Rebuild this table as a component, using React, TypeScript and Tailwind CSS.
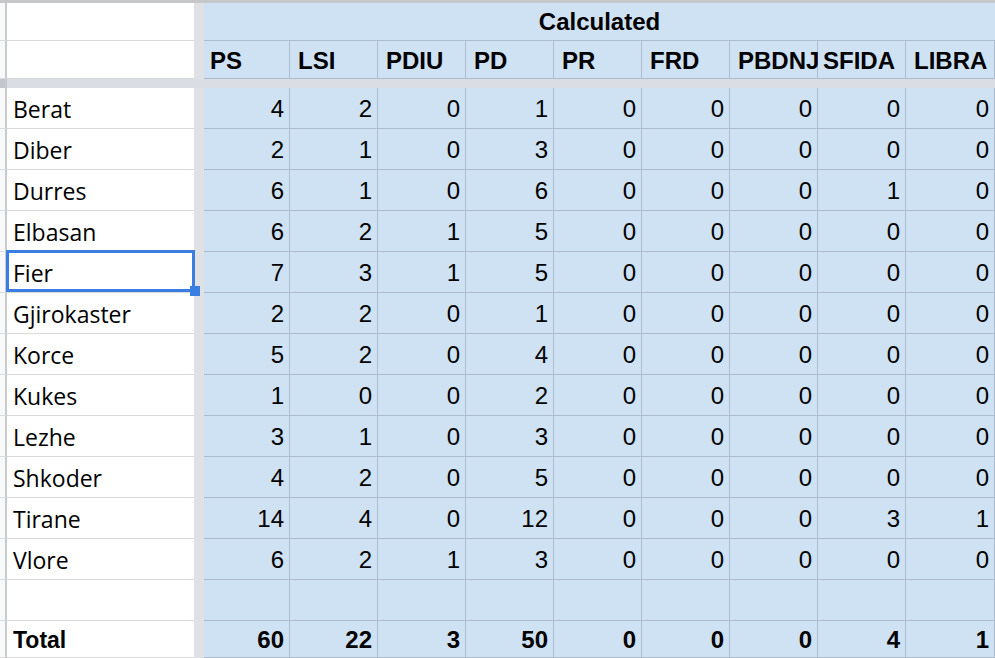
import React from "react";

type Row = { name: string; values: (number | null)[] };

const parties = ["PS", "LSI", "PDIU", "PD", "PR", "FRD", "PBDNJ", "SFIDA", "LIBRA"];

const rows: Row[] = [
  { name: "Berat", values: [4, 2, 0, 1, 0, 0, 0, 0, 0] },
  { name: "Diber", values: [2, 1, 0, 3, 0, 0, 0, 0, 0] },
  { name: "Durres", values: [6, 1, 0, 6, 0, 0, 0, 1, 0] },
  { name: "Elbasan", values: [6, 2, 1, 5, 0, 0, 0, 0, 0] },
  { name: "Fier", values: [7, 3, 1, 5, 0, 0, 0, 0, 0] },
  { name: "Gjirokaster", values: [2, 2, 0, 1, 0, 0, 0, 0, 0] },
  { name: "Korce", values: [5, 2, 0, 4, 0, 0, 0, 0, 0] },
  { name: "Kukes", values: [1, 0, 0, 2, 0, 0, 0, 0, 0] },
  { name: "Lezhe", values: [3, 1, 0, 3, 0, 0, 0, 0, 0] },
  { name: "Shkoder", values: [4, 2, 0, 5, 0, 0, 0, 0, 0] },
  { name: "Tirane", values: [14, 4, 0, 12, 0, 0, 0, 3, 1] },
  { name: "Vlore", values: [6, 2, 1, 3, 0, 0, 0, 0, 0] },
  { name: "", values: [null, null, null, null, null, null, null, null, null] },
];

const totals = [60, 22, 3, 50, 0, 0, 0, 4, 1];

const colWidth = (i: number) =>
  i === 0 ? "w-[86px]" : i === parties.length - 1 ? "flex-1" : "w-[88px]";

const LeftStrip = ({ h }: { h: string }) => (
  <div className={`${h} w-[7px] shrink-0 bg-[#f8f9fa] border-r-2 border-r-[#c9cacc] border-b border-b-[#dcdcdc]`} />
);

const Gap = () => <div className="w-[10px] shrink-0 bg-[#dfe1e5]" />;

const NameCell = ({ children, bold }: { children?: React.ReactNode; bold?: boolean }) => (
  <div
    className={`w-[187px] shrink-0 bg-white border-b border-[#d9d9d9] flex items-center pl-[6px] pt-[2px] ${
      bold
        ? "font-['Liberation_Sans',Arial,sans-serif] font-bold text-[23px]"
        : "font-['Open_Sans',sans-serif] text-[23px]"
    } text-black`}
  >
    {children}
  </div>
);

export default function App() {
  return (
    <div className="w-[995px] h-[658px] overflow-hidden bg-white relative flex flex-col font-['Liberation_Sans',Arial,sans-serif] text-black">
      <div className="h-[3px] shrink-0 bg-[#c6c7c9]" />

      {/* title row */}
      <div className="flex h-[38px] shrink-0">
        <LeftStrip h="h-[38px]" />
        <NameCell />
        <Gap />
        <div className="flex-1 bg-[#cfe2f3] border-b border-[#adbccc] flex items-center justify-center pt-[1px] font-bold text-[24px]">
          Calculated
        </div>
      </div>

      {/* party header row */}
      <div className="flex h-[38px] shrink-0">
        <LeftStrip h="h-[38px]" />
        <NameCell />
        <Gap />
        {parties.map((p, i) => (
          <div
            key={p}
            className={`${colWidth(i)} shrink-0 bg-[#cfe2f3] border-b border-r border-[#adbccc] flex items-center pt-[2px] ${
              i === 7 ? "pl-[5px]" : i === 0 ? "pl-[6px]" : "pl-[8px]"
            } font-bold text-[24px] whitespace-nowrap overflow-visible`}
          >
            {p}
          </div>
        ))}
      </div>

      {/* frozen divider */}
      <div className="flex h-[9px] shrink-0">
        <div className="w-[7px] bg-[#c4c7cc]" />
        <div className="flex-1 bg-[#dadde3]" />
      </div>

      {rows.map((r, ri) => (
        <div key={ri} className="flex h-[41px] shrink-0">
          <LeftStrip h="h-[41px]" />
          <NameCell>{r.name}</NameCell>
          <Gap />
          {r.values.map((v, i) => (
            <div
              key={i}
              className={`${colWidth(i)} shrink-0 bg-[#cfe2f3] border-b border-r border-[#adbccc] flex items-center justify-end pr-[5px] pt-[2px] text-[24px]`}
            >
              {v}
            </div>
          ))}
        </div>
      ))}

      {/* totals */}
      <div className="flex h-[37px] shrink-0">
        <LeftStrip h="h-[37px]" />
        <NameCell bold>Total</NameCell>
        <Gap />
        {totals.map((v, i) => (
          <div
            key={i}
            className={`${colWidth(i)} shrink-0 bg-[#cfe2f3] border-b border-r border-[#adbccc] flex items-center justify-end pr-[5px] pt-[2px] font-bold text-[24px]`}
          >
            {v}
          </div>
        ))}
      </div>

      {/* selected cell */}
      <div className="absolute left-[6px] top-[250px] w-[189px] h-[42px] border-[3px] border-[#3b7ee3] pointer-events-none" />
      <div className="absolute left-[190px] top-[286px] w-[10px] h-[10px] bg-[#3b7ee3]" />
    </div>
  );
}
